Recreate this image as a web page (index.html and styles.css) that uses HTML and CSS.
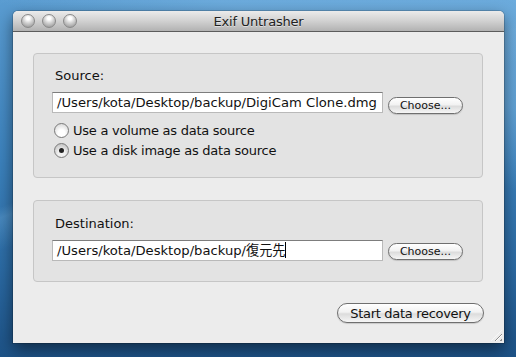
FILE: index.html
```html
<!DOCTYPE html>
<html>
<head>
  <meta charset="utf-8">
  <title>Exif Untrasher</title>
  <link rel="stylesheet" href="styles.css">
</head>
<body>
  <div class="window">
    <header class="titlebar">
      <div class="lights">
        <span class="light"></span>
        <span class="light"></span>
        <span class="light"></span>
      </div>
      <span class="title">Exif Untrasher</span>
    </header>
    <main class="content">
      <section class="group source">
        <div class="label">Source:</div>
        <div class="row">
          <div class="field">/Users/kota/Desktop/backup/DigiCam Clone.dmg</div>
          <span class="btn small">Choose...</span>
        </div>
        <div class="radios">
          <div class="radio-row"><span class="radio"></span>Use a volume as data source</div>
          <div class="radio-row"><span class="radio on"></span>Use a disk image as data source</div>
        </div>
      </section>
      <section class="group dest">
        <div class="label">Destination:</div>
        <div class="row">
          <div class="field">/Users/kota/Desktop/backup/復元先<span class="caret"></span></div>
          <span class="btn small">Choose...</span>
        </div>
      </section>
      <div class="actions">
        <span class="btn big">Start data recovery</span>
      </div>
    </main>
    <span class="grip"></span>
  </div>
</body>
</html>
```

FILE: styles.css
```css
html, body {
  margin: 0;
  padding: 0;
  width: 516px;
  height: 357px;
  overflow: hidden;
}
body {
  box-sizing: border-box;
  padding: 11px 0 0 13px;
  font-family: "DejaVu Sans", "Noto Sans CJK JP", sans-serif;
  color: #111;
  background:
    linear-gradient(160deg, transparent 0 38%, rgba(120,180,225,0.3) 40%, transparent 46%),
    linear-gradient(200deg, rgba(130,190,235,0.45) 0 20%, transparent 35%),
    linear-gradient(180deg, #5a9cd1 0%, #3c82bd 45%, #2b6aa3 75%, #1d5286 100%);
}
.window {
  position: relative;
  width: 491px;
  height: 332px;
  background: #ececec;
  border-radius: 5px 5px 0 0;
  box-shadow: 0 6px 16px rgba(0,0,0,0.5), 0 0 0 1px rgba(0,0,0,0.15);
  display: flex;
  flex-direction: column;
}
.titlebar {
  height: 21px;
  flex: none;
  position: relative;
  display: flex;
  align-items: center;
  justify-content: center;
  background: linear-gradient(#ebebeb, #d1d1d1 50%, #b2b2b2);
  border-bottom: 1px solid #5c5c5c;
  border-radius: 5px 5px 0 0;
  box-sizing: border-box;
}
.lights {
  position: absolute;
  left: 8px;
  top: 3px;
  display: flex;
  gap: 7px;
}
.light {
  width: 14px;
  height: 14px;
  border-radius: 50%;
  box-sizing: border-box;
  border: 1px solid #8a8a8a;
  background: radial-gradient(circle at 50% 28%, #ffffff 0 14%, #d2d2d2 45%, #a4a4a4 80%, #c6c6c6);
}
.title {
  font-size: 13px;
  color: #222;
  letter-spacing: -0.2px;
  text-shadow: 0 1px 0 rgba(255,255,255,0.5);
}
.content {
  flex: 1;
  padding: 21px 21px 0 20px;
  display: flex;
  flex-direction: column;
}
.group {
  box-sizing: border-box;
  background: #e3e3e3;
  border: 1px solid #c6c6c6;
  border-radius: 4px;
  padding: 14px 19px 0 18px;
}
.source { height: 125px; }
.dest {
  height: 82px;
  margin-top: 22px;
  padding-top: 15px;
}
.label {
  font-size: 13px;
  line-height: 16px;
  padding-left: 3px;
}
.row {
  display: flex;
  align-items: flex-start;
  gap: 5px;
  margin-top: 8px;
}
.field {
  box-sizing: border-box;
  width: 331px;
  height: 21px;
  background: #fff;
  border: 1px solid #b9b9b9;
  border-top-color: #7d7d7d;
  padding: 1px 0 0 4px;
  font-size: 13.15px;
  line-height: 18px;
  white-space: nowrap;
  overflow: hidden;
}
.caret {
  display: inline-block;
  width: 1px;
  height: 16px;
  background: #000;
  vertical-align: -3px;
}
.btn {
  box-sizing: border-box;
  display: inline-flex;
  align-items: center;
  justify-content: center;
  border: 1px solid #6f6f6f;
  background: linear-gradient(#ffffff, #f2f2f2 45%, #dcdcdc 55%, #f6f6f6);
  box-shadow: 0 1px 1px rgba(0,0,0,0.15);
  color: #111;
}
.btn.small {
  width: 75px;
  height: 17px;
  margin-top: 5px;
  border-radius: 9px;
  font-size: 11px;
}
.dest .btn.small { margin-top: 3px; }
.radios {
  margin-top: 6px;
  display: flex;
  flex-direction: column;
}
.radio-row {
  height: 20px;
  display: flex;
  align-items: center;
  font-size: 13px;
  letter-spacing: -0.25px;
  gap: 4px;
  padding-left: 2px;
}
.radio {
  width: 15px;
  height: 15px;
  box-sizing: border-box;
  border-radius: 50%;
  border: 1px solid #7a7a7a;
  background: radial-gradient(circle at 50% 70%, #ffffff 0 30%, #e9e9e9 60%, #cfcfcf);
  position: relative;
}
.radio.on {
  background: radial-gradient(circle at 50% 70%, #f0f0f0 0 30%, #d6d6d6 60%, #b9b9b9);
}
.radio.on::after {
  content: "";
  position: absolute;
  left: 4px;
  top: 4px;
  width: 5px;
  height: 5px;
  border-radius: 50%;
  background: #222;
}
.actions {
  display: flex;
  justify-content: flex-end;
  margin-top: 21px;
  margin-right: -1px;
}
.btn.big {
  width: 147px;
  height: 20px;
  border-radius: 10px;
  font-size: 13px;
  letter-spacing: -0.3px;
}
.grip {
  position: absolute;
  right: 2px;
  bottom: 2px;
  width: 11px;
  height: 11px;
  background: repeating-linear-gradient(135deg, transparent 0 2px, #8d8d8d 2px 3px, #fff 3px 4px);
  clip-path: polygon(100% 0, 100% 100%, 0 100%);
}
```
